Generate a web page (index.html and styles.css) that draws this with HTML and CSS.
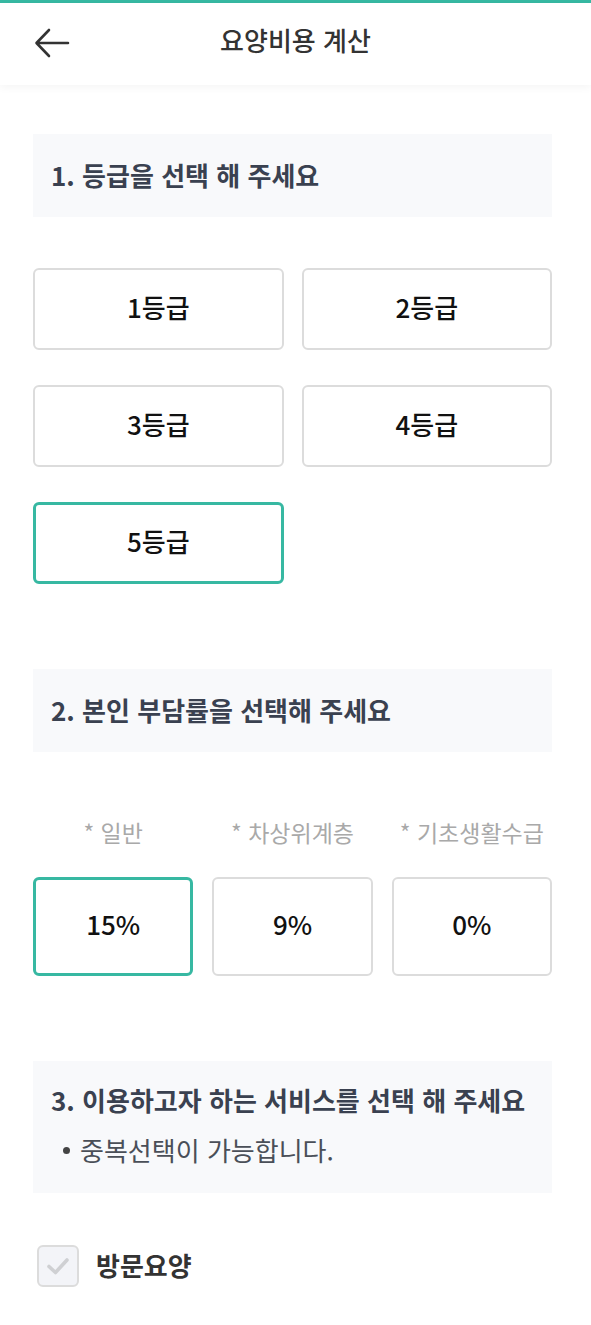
FILE: index.html
```html
<!DOCTYPE html>
<html lang="ko">
<head>
<meta charset="utf-8">
<link rel="stylesheet" href="styles.css">
</head>
<body>
<div class="topline"></div>
<header class="header">
  <button class="back" aria-label="뒤로">
    <svg width="36" height="32" viewBox="0 0 36 32"><path d="M34 16H3M15 3L2.5 16L15 29" fill="none" stroke="#333" stroke-width="2.6" stroke-linecap="round" stroke-linejoin="round"/></svg>
  </button>
  <h1 class="title">요양비용 계산</h1>
</header>
<main class="content">
  <section class="sec-head sec1"><h2>1. 등급을 선택 해 주세요</h2></section>
  <div class="grades">
    <div class="opt">1등급</div>
    <div class="opt">2등급</div>
    <div class="opt">3등급</div>
    <div class="opt">4등급</div>
    <div class="opt selected">5등급</div>
  </div>

  <section class="sec-head sec2"><h2>2. 본인 부담률을 선택해 주세요</h2></section>
  <div class="rates">
    <div class="rate"><div class="lbl">* 일반</div><div class="opt tall selected">15%</div></div>
    <div class="rate"><div class="lbl">* 차상위계층</div><div class="opt tall">9%</div></div>
    <div class="rate"><div class="lbl">* 기초생활수급</div><div class="opt tall">0%</div></div>
  </div>

  <section class="sec-head sec3">
    <h2>3. 이용하고자 하는 서비스를 선택 해 주세요</h2>
    <p class="bullet">중복선택이 가능합니다.</p>
  </section>
  <label class="check">
    <span class="box"><svg width="24" height="20" viewBox="0 0 24 20"><path d="M3 10.5L9.5 16.5L21 4" fill="none" stroke="#cfd0d3" stroke-width="3.6" stroke-linecap="round" stroke-linejoin="round"/></svg></span>
    <span class="check-text">방문요양</span>
  </label>
</main>
</body>
</html>
```
FILE: styles.css
```css
* { box-sizing: border-box; }
html, body { margin: 0; padding: 0; background: #fff; }
body {
  font-family: "Noto Sans CJK KR", "Noto Sans", sans-serif;
  color: #111;
  width: 591px;
}
.topline { height: 3px; background: #37b8a2; }
.header {
  position: relative;
  height: 82px;
  display: flex;
  align-items: center;
  justify-content: center;
  box-shadow: 0 3px 8px rgba(0,0,0,0.04);
}
.back {
  position: absolute;
  left: 34px;
  top: 24px;
  border: 0;
  background: none;
  padding: 0;
  width: 36px;
  height: 32px;
}
.back svg { display: block; }
.title {
  margin: 0;
  font-size: 26px;
  font-weight: 500;
  color: #333;
  line-height: 34px;
  margin-top: -8px;
}
.content { padding: 0 39px 0 33px; }
.sec-head {
  background: #f8f9fb;
  padding: 24px 18px 25px;
}
.sec-head h2 {
  margin: 0;
  font-size: 26px;
  font-weight: 700;
  color: #3a4150;
  line-height: 34px;
}
.sec1 { margin-top: 49px; }
.grades {
  margin-top: 51px;
  display: grid;
  grid-template-columns: 1fr 1fr;
  column-gap: 18px;
  row-gap: 35px;
}
.opt {
  height: 82px;
  border: 2px solid #dcdcdc;
  border-radius: 6px;
  display: flex;
  align-items: center;
  justify-content: center;
  font-size: 26px;
  font-weight: 500;
  color: #111;
  padding-bottom: 6px;
}
.opt.selected { border: 3px solid #37b8a2; }
.sec2 { margin-top: 85px; }
.rates {
  display: grid;
  grid-template-columns: repeat(3, 1fr);
  column-gap: 19px;
  margin-top: 64px;
}
.rate { display: flex; flex-direction: column; }
.lbl {
  text-align: center;
  font-size: 23px;
  line-height: 32px;
  color: #a9a9a9;
  margin-bottom: 29px;
}
.opt.tall { height: 99px; }
.sec3 { margin-top: 85px; padding-bottom: 26px; padding-top: 22px; }
.bullet {
  margin: 16px 0 0 12px;
  font-size: 26px;
  line-height: 34px;
  color: #4a4f58;
  display: flex;
  align-items: center;
}
.bullet::before {
  content: "";
  width: 7px;
  height: 7px;
  border-radius: 50%;
  background: #444;
  margin-right: 10px;
}
.check {
  margin-top: 52px;
  display: flex;
  align-items: center;
  padding-left: 4px;
}
.box {
  width: 42px;
  height: 42px;
  border: 2px solid #dcdcdc;
  border-radius: 6px;
  background: #f3f4f8;
  display: flex;
  align-items: center;
  justify-content: center;
}
.check-text {
  margin-left: 17px;
  font-size: 26px;
  font-weight: 700;
  color: #333;
  padding-bottom: 4px;
}
```
